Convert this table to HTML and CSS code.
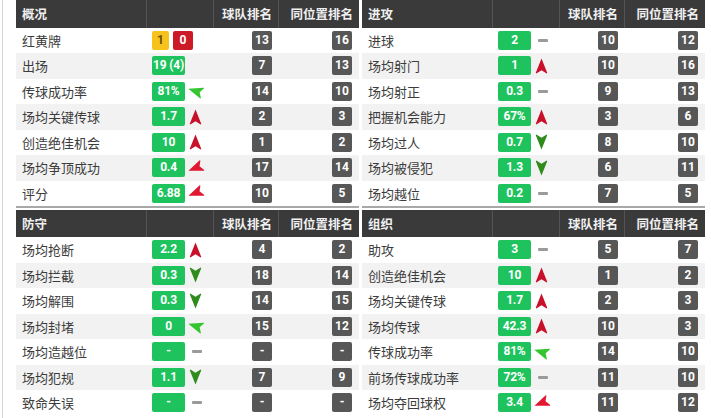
FILE: index.html
```html
<!DOCTYPE html>
<html lang="zh">
<head>
<meta charset="utf-8">
<link rel="stylesheet" href="styles.css">
<title>球员数据</title>
</head>
<body>
<svg width="0" height="0" class="defs">
  <defs>
    <polygon id="nav" points="12,1.5 4.5,20.5 5.2,21.2 12,17.2 18.8,21.2 19.5,20.5"/>
  </defs>
</svg>
<div class="page">
  <div class="col">
    <section class="panel first">
      <div class="row head"><div class="c-label">概况</div><div class="c-val"></div><div class="c-rank">球队排名</div><div class="c-rank">同位置排名</div></div>
      <div class="row"><div class="c-label">红黄牌</div><div class="c-val"><span class="card yellow">1</span><span class="card red">0</span></div><div class="c-rank"><span class="rk">13</span></div><div class="c-rank"><span class="rk">16</span></div></div>
      <div class="row"><div class="c-label">出场</div><div class="c-val"><span class="vb">19 (4)</span></div><div class="c-rank"><span class="rk">7</span></div><div class="c-rank"><span class="rk">13</span></div></div>
      <div class="row"><div class="c-label">传球成功率</div><div class="c-val"><span class="vb">81%</span><svg class="ic g-mild" viewBox="3.5 1 17 21"><use href="#nav"/></svg></div><div class="c-rank"><span class="rk">14</span></div><div class="c-rank"><span class="rk">10</span></div></div>
      <div class="row"><div class="c-label">场均关键传球</div><div class="c-val"><span class="vb">1.7</span><svg class="ic r-up" viewBox="3.5 1 17 21"><use href="#nav"/></svg></div><div class="c-rank"><span class="rk">2</span></div><div class="c-rank"><span class="rk">3</span></div></div>
      <div class="row"><div class="c-label">创造绝佳机会</div><div class="c-val"><span class="vb">10</span><svg class="ic r-up" viewBox="3.5 1 17 21"><use href="#nav"/></svg></div><div class="c-rank"><span class="rk">1</span></div><div class="c-rank"><span class="rk">2</span></div></div>
      <div class="row"><div class="c-label">场均争顶成功</div><div class="c-val"><span class="vb">0.4</span><svg class="ic r-mild" viewBox="3.5 1 17 21"><use href="#nav"/></svg></div><div class="c-rank"><span class="rk">17</span></div><div class="c-rank"><span class="rk">14</span></div></div>
      <div class="row"><div class="c-label">评分</div><div class="c-val"><span class="vb">6.88</span><svg class="ic r-mild" viewBox="3.5 1 17 21"><use href="#nav"/></svg></div><div class="c-rank"><span class="rk">10</span></div><div class="c-rank"><span class="rk">5</span></div></div>
    </section>
    <section class="panel">
      <div class="row head"><div class="c-label">防守</div><div class="c-val"></div><div class="c-rank">球队排名</div><div class="c-rank">同位置排名</div></div>
      <div class="row"><div class="c-label">场均抢断</div><div class="c-val"><span class="vb">2.2</span><svg class="ic r-up" viewBox="3.5 1 17 21"><use href="#nav"/></svg></div><div class="c-rank"><span class="rk">4</span></div><div class="c-rank"><span class="rk">2</span></div></div>
      <div class="row"><div class="c-label">场均拦截</div><div class="c-val"><span class="vb">0.3</span><svg class="ic g-down" viewBox="3.5 1 17 21"><use href="#nav"/></svg></div><div class="c-rank"><span class="rk">18</span></div><div class="c-rank"><span class="rk">14</span></div></div>
      <div class="row"><div class="c-label">场均解围</div><div class="c-val"><span class="vb">0.3</span><svg class="ic g-down" viewBox="3.5 1 17 21"><use href="#nav"/></svg></div><div class="c-rank"><span class="rk">14</span></div><div class="c-rank"><span class="rk">15</span></div></div>
      <div class="row"><div class="c-label">场均封堵</div><div class="c-val"><span class="vb">0</span><svg class="ic g-mild" viewBox="3.5 1 17 21"><use href="#nav"/></svg></div><div class="c-rank"><span class="rk">15</span></div><div class="c-rank"><span class="rk">12</span></div></div>
      <div class="row"><div class="c-label">场均造越位</div><div class="c-val"><span class="vb">-</span><span class="dash"></span></div><div class="c-rank"><span class="rk">-</span></div><div class="c-rank"><span class="rk">-</span></div></div>
      <div class="row"><div class="c-label">场均犯规</div><div class="c-val"><span class="vb">1.1</span><svg class="ic g-down" viewBox="3.5 1 17 21"><use href="#nav"/></svg></div><div class="c-rank"><span class="rk">7</span></div><div class="c-rank"><span class="rk">9</span></div></div>
      <div class="row"><div class="c-label">致命失误</div><div class="c-val"><span class="vb">-</span><span class="dash"></span></div><div class="c-rank"><span class="rk">-</span></div><div class="c-rank"><span class="rk">-</span></div></div>
    </section>
  </div>
  <div class="col">
    <section class="panel first">
      <div class="row head"><div class="c-label">进攻</div><div class="c-val"></div><div class="c-rank">球队排名</div><div class="c-rank">同位置排名</div></div>
      <div class="row"><div class="c-label">进球</div><div class="c-val"><span class="vb">2</span><span class="dash"></span></div><div class="c-rank"><span class="rk">10</span></div><div class="c-rank"><span class="rk">12</span></div></div>
      <div class="row"><div class="c-label">场均射门</div><div class="c-val"><span class="vb">1</span><svg class="ic r-up" viewBox="3.5 1 17 21"><use href="#nav"/></svg></div><div class="c-rank"><span class="rk">10</span></div><div class="c-rank"><span class="rk">16</span></div></div>
      <div class="row"><div class="c-label">场均射正</div><div class="c-val"><span class="vb">0.3</span><span class="dash"></span></div><div class="c-rank"><span class="rk">9</span></div><div class="c-rank"><span class="rk">13</span></div></div>
      <div class="row"><div class="c-label">把握机会能力</div><div class="c-val"><span class="vb">67%</span><svg class="ic r-up" viewBox="3.5 1 17 21"><use href="#nav"/></svg></div><div class="c-rank"><span class="rk">3</span></div><div class="c-rank"><span class="rk">6</span></div></div>
      <div class="row"><div class="c-label">场均过人</div><div class="c-val"><span class="vb">0.7</span><svg class="ic g-down" viewBox="3.5 1 17 21"><use href="#nav"/></svg></div><div class="c-rank"><span class="rk">8</span></div><div class="c-rank"><span class="rk">10</span></div></div>
      <div class="row"><div class="c-label">场均被侵犯</div><div class="c-val"><span class="vb">1.3</span><svg class="ic g-down" viewBox="3.5 1 17 21"><use href="#nav"/></svg></div><div class="c-rank"><span class="rk">6</span></div><div class="c-rank"><span class="rk">11</span></div></div>
      <div class="row"><div class="c-label">场均越位</div><div class="c-val"><span class="vb">0.2</span><span class="dash"></span></div><div class="c-rank"><span class="rk">7</span></div><div class="c-rank"><span class="rk">5</span></div></div>
    </section>
    <section class="panel">
      <div class="row head"><div class="c-label">组织</div><div class="c-val"></div><div class="c-rank">球队排名</div><div class="c-rank">同位置排名</div></div>
      <div class="row"><div class="c-label">助攻</div><div class="c-val"><span class="vb">3</span><span class="dash"></span></div><div class="c-rank"><span class="rk">5</span></div><div class="c-rank"><span class="rk">7</span></div></div>
      <div class="row"><div class="c-label">创造绝佳机会</div><div class="c-val"><span class="vb">10</span><svg class="ic r-up" viewBox="3.5 1 17 21"><use href="#nav"/></svg></div><div class="c-rank"><span class="rk">1</span></div><div class="c-rank"><span class="rk">2</span></div></div>
      <div class="row"><div class="c-label">场均关键传球</div><div class="c-val"><span class="vb">1.7</span><svg class="ic r-up" viewBox="3.5 1 17 21"><use href="#nav"/></svg></div><div class="c-rank"><span class="rk">2</span></div><div class="c-rank"><span class="rk">3</span></div></div>
      <div class="row"><div class="c-label">场均传球</div><div class="c-val"><span class="vb">42.3</span><svg class="ic r-up" viewBox="3.5 1 17 21"><use href="#nav"/></svg></div><div class="c-rank"><span class="rk">10</span></div><div class="c-rank"><span class="rk">3</span></div></div>
      <div class="row"><div class="c-label">传球成功率</div><div class="c-val"><span class="vb">81%</span><svg class="ic g-mild" viewBox="3.5 1 17 21"><use href="#nav"/></svg></div><div class="c-rank"><span class="rk">14</span></div><div class="c-rank"><span class="rk">10</span></div></div>
      <div class="row"><div class="c-label">前场传球成功率</div><div class="c-val"><span class="vb">72%</span><span class="dash"></span></div><div class="c-rank"><span class="rk">11</span></div><div class="c-rank"><span class="rk">10</span></div></div>
      <div class="row"><div class="c-label">场均夺回球权</div><div class="c-val"><span class="vb">3.4</span><svg class="ic r-mild" viewBox="3.5 1 17 21"><use href="#nav"/></svg></div><div class="c-rank"><span class="rk">11</span></div><div class="c-rank"><span class="rk">12</span></div></div>
    </section>
  </div>
</div>
</body>
</html>
```

FILE: styles.css
```css
html, body {
  margin: 0;
  padding: 0;
  background: #ffffff;
}
body {
  font-family: "Noto Sans CJK SC", "Noto Sans", "Liberation Sans", sans-serif;
  color: #333333;
  overflow: hidden;
}
.defs {
  position: absolute;
  width: 0;
  height: 0;
}
.page {
  display: flex;
  gap: 3px;
  border-left: 1px solid #d6d6d6;
  margin-left: 2px;
  padding-left: 13px;
  height: 418px;
  box-sizing: border-box;
}
.col {
  width: 343px;
  display: flex;
  flex-direction: column;
}
.panel.first {
  border-bottom: 2px solid #a8a8a8;
  margin-bottom: 1.5px;
}
.row {
  display: grid;
  grid-template-columns: 131px 67px 65px 80px;
  height: 25.5px;
  align-items: center;
}
.row:nth-child(odd) {
  background: #f2f2f2;
}
.row.head {
  height: 27.5px;
  background: #3a3a3a;
  color: #f0f0f0;
  font-size: 12.5px;
  font-weight: bold;
  align-items: stretch;
}
.row.head > div {
  display: flex;
  align-items: center;
  border-right: 1px solid #545454;
}
.row.head > div:last-child {
  border-right: none;
}
.row.head .c-rank {
  justify-content: flex-end;
  padding-right: 6px;
}
.c-label {
  padding-left: 6px;
  font-size: 13px;
  color: #3c3c3c;
  white-space: nowrap;
}
.row.head .c-label {
  color: #f0f0f0;
  font-size: 12.5px;
}
.c-val {
  display: flex;
  align-items: center;
  padding-left: 5px;
}
.c-rank {
  display: flex;
  justify-content: flex-end;
  padding-right: 7px;
}
.vb, .rk, .card {
  font-family: "Roboto", "Liberation Sans", sans-serif;
  font-weight: bold;
  font-size: 12px;
  color: #ffffff;
  height: 19px;
  line-height: 19px;
  text-align: center;
  border-radius: 2px;
  display: inline-block;
}
.vb {
  width: 33px;
  background: #1fc35e;
  white-space: nowrap;
  letter-spacing: -0.2px;
}
.rk {
  width: 20px;
  background: #575757;
}
.card {
  width: 17px;
}
.card.yellow {
  background: #f5c31c;
  color: #6a4d00;
}
.card.red {
  width: 20px;
  background: #cc1b27;
  margin-left: 4px;
}
.ic {
  width: 13px;
  height: 16px;
  margin-left: 4px;
}
.r-up { fill: #c8102a; }
.g-down { fill: #2e8b1c; transform: rotate(180deg); }
.r-mild { fill: #e01830; transform: rotate(-112deg); }
.g-mild { fill: #35c531; transform: rotate(-72deg); }
.dash {
  width: 10px;
  height: 3px;
  background: #9a9a9a;
  margin-left: 7px;
  border-radius: 1px;
}
```
